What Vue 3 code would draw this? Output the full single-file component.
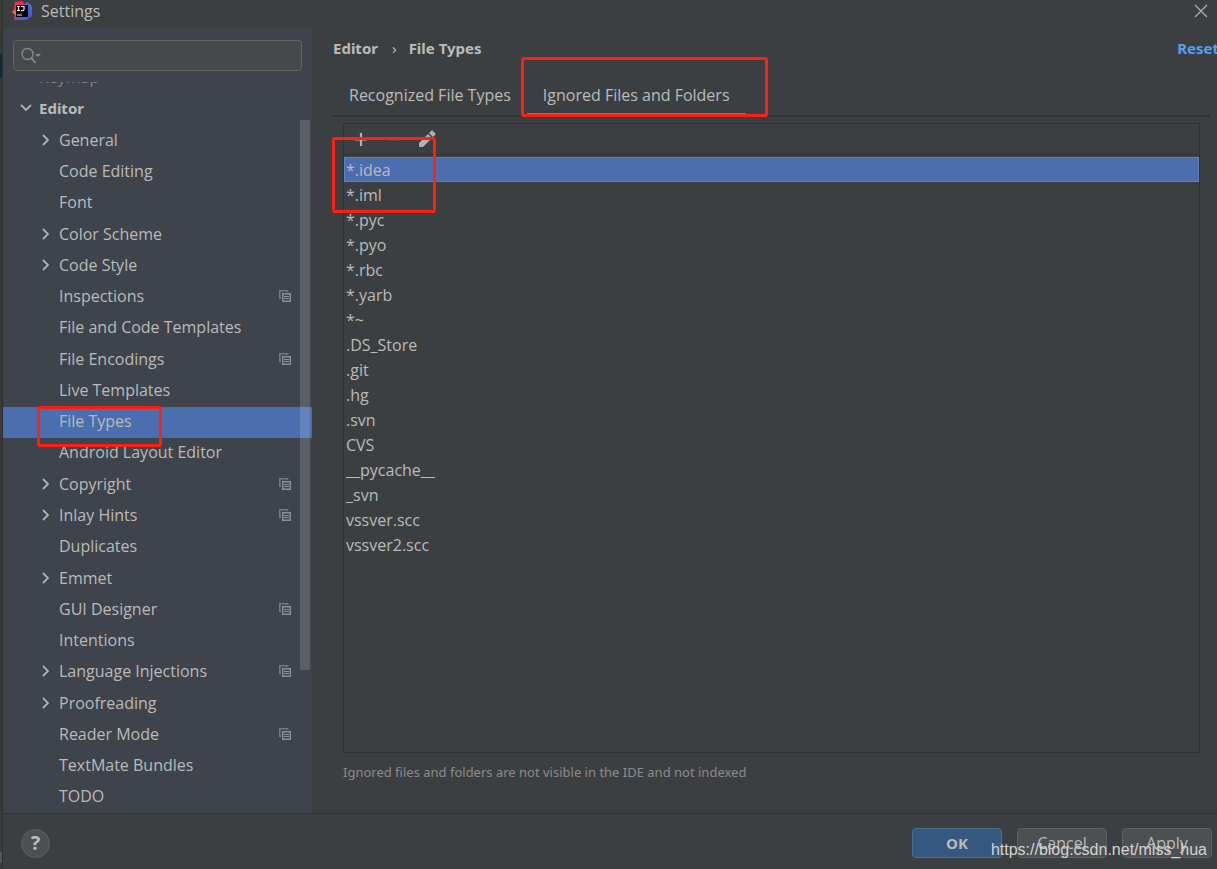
<script setup>
import { ref } from 'vue'

const tree = [
  { name: 'General', open: true },
  { name: 'Code Editing' },
  { name: 'Font' },
  { name: 'Color Scheme', open: true },
  { name: 'Code Style', open: true },
  { name: 'Inspections', project: true },
  { name: 'File and Code Templates' },
  { name: 'File Encodings', project: true },
  { name: 'Live Templates' },
  { name: 'File Types', marked: true },
  { name: 'Android Layout Editor' },
  { name: 'Copyright', open: true, project: true },
  { name: 'Inlay Hints', open: true, project: true },
  { name: 'Duplicates' },
  { name: 'Emmet', open: true },
  { name: 'GUI Designer', project: true },
  { name: 'Intentions' },
  { name: 'Language Injections', open: true, project: true },
  { name: 'Proofreading', open: true },
  { name: 'Reader Mode', project: true },
  { name: 'TextMate Bundles' },
  { name: 'TODO' },
]
const patterns = [
  '*.idea', '*.iml', '*.pyc', '*.pyo', '*.rbc', '*.yarb', '*~', '.DS_Store',
  '.git', '.hg', '.svn', 'CVS', '__pycache__', '_svn', 'vssver.scc', 'vssver2.scc',
]
const page = ref('File Types')
const pattern = ref('*.idea')
const query = ref('')
</script>

<template>
  <div class="screen">
    <div class="behind"><span class="behind-selection"></span><span class="behind-bar"></span></div>
    <div class="dialog">
      <header class="titlebar">
        <svg class="logo" width="20" height="20" viewBox="0 0 20 20">
          <defs>
            <linearGradient id="warm" x1="0" y1="0" x2="0" y2="1">
              <stop offset="0" stop-color="#fe2857" /><stop offset=".45" stop-color="#f4305f" />
              <stop offset=".65" stop-color="#fc801d" /><stop offset=".85" stop-color="#b13a9d" />
            </linearGradient>
            <linearGradient id="cool" x1="0" y1="0" x2="1" y2="1">
              <stop offset="0" stop-color="#7b4fd0" /><stop offset=".5" stop-color="#3a70ee" /><stop offset="1" stop-color="#5348d8" />
            </linearGradient>
          </defs>
          <path d="M3 1 10 0l3 4-2 15-9 0 1-5-3-3 2-3z" fill="url(#warm)" />
          <path d="m12 4 3-3 5 4v10l-6 4-9 0 7-4z" fill="url(#cool)" />
          <path d="M4 4h12v12H4z" fill="#050505" />
          <path d="M5 5.500h3M6.500 5.500v4M5 9.500h3M9 5.500h3v3q0 1.200-1.200 1.200H9M5 14h5" fill="none" stroke="#eee" stroke-width="1.200" />
        </svg>
        <span class="title">Settings</span>
        <button class="close" aria-label="Close">
          <svg width="14" height="14" viewBox="0 0 14 14"><path d="m1 1 12 12M13 1 1 13" fill="none" stroke="#afb1b3" stroke-width="1.200" /></svg>
        </button>
      </header>

      <div class="body">
        <aside class="sidebar">
          <label class="search">
            <svg width="22" height="18" viewBox="0 0 22 18">
              <circle cx="6.500" cy="7" r="5.500" fill="none" stroke="#7f8b91" stroke-width="1.400" />
              <path d="m10.500 11 4 5" stroke="#7f8b91" stroke-width="2" /><path d="M14 7h6L17 10z" fill="#7f8b91" />
            </svg>
            <input v-model="query" type="text" aria-label="Search settings" />
          </label>
          <nav class="tree" aria-label="Settings pages">
            <div class="scrolled"><span>Keymap</span></div>
            <div class="rows">
              <button class="row group">
                <svg class="arrow" width="12" height="12" viewBox="0 0 12 12"><path d="m1 3 5 5 5-5" /></svg>
                <span>Editor</span>
              </button>
              <button v-for="item in tree" :key="item.name" class="row" :class="{ selected: page === item.name }" @click="page = item.name">
                <svg v-if="item.open" class="arrow" width="12" height="12" viewBox="0 0 12 12"><path d="m3 1 5 5-5 5" /></svg>
                <span v-else class="arrow"></span>
                <span>{{ item.name }}</span>
                <svg v-if="item.project" class="project" width="12" height="12" viewBox="0 0 12 12">
                  <path class="back" d="M2 8.200H.8V.8h7.700V2" /><path d="M3.700 3.700h7.600v7.600H3.700z" /><path class="lines" d="M5 6.500h5M5 8.500h5" />
                </svg>
                <span v-if="item.marked" class="mark mark-page"></span>
              </button>
            </div>
            <span class="scrollbar"></span>
          </nav>
        </aside>

        <main class="content">
          <div class="crumbs">
            <span>Editor</span><span class="sep">›</span><span>File Types</span>
            <a class="reset" href="#reset">Reset</a>
          </div>
          <div class="tabs" role="tablist">
            <button role="tab" class="tab">Recognized File Types</button>
            <button role="tab" class="tab active" aria-selected="true">Ignored Files and Folders<span class="mark mark-tab"></span></button>
          </div>
          <section class="panel">
            <div class="tools">
              <button aria-label="Add"><svg width="20" height="20" viewBox="0 0 20 20"><path d="M10 4v13M4 10.500h12" stroke="#afb1b3" stroke-width="2.200" /></svg></button>
              <button aria-label="Remove" disabled><svg width="20" height="20" viewBox="0 0 20 20"><path d="M4 10.500h12" stroke="#5c5f61" stroke-width="2" /></svg></button>
              <button aria-label="Edit"><svg width="20" height="20" viewBox="0 0 20 20"><path d="m2 14 9-9 4 4-9 9H2zM12 4l2.300-2.300q.7-.7 1.400 0l2.600 2.600q.7.700 0 1.400L16 8z" fill="#afb1b3" /></svg></button>
            </div>
            <ul class="patterns" role="listbox" aria-label="Ignored files and folders">
              <li v-for="p in patterns" :key="p" role="option" :aria-selected="p === pattern" :class="{ selected: p === pattern }" @click="pattern = p">{{ p }}</li>
            </ul>
            <span class="mark mark-patterns"></span>
          </section>
          <p class="hint">Ignored files and folders are not visible in the IDE and not indexed</p>
        </main>
      </div>

      <footer class="footer">
        <button class="help" aria-label="Help">?</button>
        <button class="action primary">OK</button>
        <button class="action">Cancel</button>
        <button class="action">Apply</button>
        <span class="watermark">https://blog.csdn.net/miss_hua</span>
      </footer>
    </div>
  </div>
</template>

<style>
body { margin: 0; background: #3c3f41; }
</style>

<style scoped>
* { box-sizing: border-box; }
.screen { display: flex; min-height: 100vh; overflow: hidden; font: 16px/20px "Open Sans", "Noto Sans", sans-serif; color: #bbbbbb; background: #3c3f41; }
button { font: inherit; color: inherit; background: none; border: 0; padding: 0; text-align: left; }
.behind { display: flex; flex-direction: column; justify-content: space-between; flex: 0 0 3px; padding: 54px 0 6px; background: #3a3b39; border-right: 1px solid #2d2f30; }
.behind-selection { height: 24px; background: #0d293e; }
.behind-bar { height: 11px; background: #55585a; }
.dialog { flex: 1; min-width: 0; display: flex; flex-direction: column; }
.titlebar { display: flex; align-items: center; height: 28px; padding: 0 9px 6px; }
.title { margin-left: 9px; flex: 1; }
.close { display: flex; }
.body { flex: 1; display: flex; }
.sidebar { flex: 0 0 309px; display: flex; flex-direction: column; padding-top: 12px; background: #3e434c; }
.search { display: flex; align-items: center; height: 31px; margin: 0 10px 11px; padding-left: 7px; background: #45494a; border: 1px solid #646464; border-radius: 4px; }
.search input { flex: 1; min-width: 0; border: 0; outline: 0; background: transparent; color: inherit; font: inherit; }
.tree { position: relative; flex: 1; display: flex; flex-direction: column; }
.scrolled { display: flex; align-items: flex-end; height: 12px; overflow: hidden; padding: 0 36px 7px; color: #83878c; }
.rows { flex: 1; display: grid; grid-auto-rows: 1fr; }
.row { position: relative; display: flex; align-items: center; min-height: 31px; padding: 0 21px 2px 37px; }
.row.group { padding-left: 17px; font: 700 15px/20px "Noto Sans", sans-serif; padding-bottom: 4px; }
.row.selected { background: #4b6eaf; }
.arrow { width: 12px; margin-right: 7px; fill: none; stroke: #afb1b3; stroke-width: 1.800; }
.project { margin-left: auto; fill: none; stroke: #87939a; stroke-width: 1.400; }
.project .back { stroke: #6f7b83; stroke-width: 1.600; }
.project .lines { stroke-width: 1; }
.scrollbar { position: absolute; top: 38px; right: 2px; width: 10px; height: 550px; background: rgba(255, 255, 255, 0.15); }
.mark { position: absolute; border: 3px solid #ff2012; border-radius: 3px; pointer-events: none; }
.mark-page { left: 34px; top: -1px; width: 125px; height: 41px; z-index: 1; }
.content { flex: 1; min-width: 0; display: flex; flex-direction: column; padding: 10px 7px 0 21px; }
.crumbs { display: flex; font: 700 15px/20px "Noto Sans", sans-serif; margin-right: -9px; }
.sep { margin: 0 12px 0 14px; font-weight: 400; }
.reset { margin-left: auto; color: #589df6; text-decoration: none; }
.tabs { display: flex; height: 59px; border-bottom: 2px solid #323232; }
.tab { position: relative; padding: 18px 16px 0; margin-bottom: -1px; border-bottom: 3px solid transparent; white-space: nowrap; }
.tab.active { border-color: #5b83c4; }
.mark-tab { left: -6px; top: -1px; width: 247px; height: 60px; z-index: 1; }
.panel { position: relative; flex: 1; margin: 6px 10px 0; border: 1px solid #323232; }
.tools { display: flex; gap: 13px; height: 31px; padding: 5px 7px; border-bottom: 1px solid #323232; }
.tools button { display: flex; }
.patterns { list-style: none; margin: 2px 0 0; padding: 0; }
.patterns li { height: 25px; padding: 3px 2px 0; }
.patterns li.selected { background: #4b6eaf; box-shadow: inset 0 0 0 1px #5f82c4; }
.mark-patterns { left: -12px; top: 13px; width: 104px; height: 76px; }
.hint { margin: 9px 10px 31px; font: 13px/20px "Noto Sans", sans-serif; color: #8c8c8c; }
.footer { position: relative; display: flex; align-items: center; gap: 15px; height: 56px; padding: 3px 5px 0 18px; border-top: 1px solid #303233; }
.help { width: 29px; height: 29px; margin-right: auto; border: 1px solid #5e6060; border-radius: 50%; background: #4c5052; font-size: 20px; font-weight: 700; text-align: center; }
.action { width: 90px; height: 30px; border: 1px solid #5e6060; border-radius: 4px; background: #4c5052; text-align: center; }
.primary { background: #365880; border-color: #4c708c; font: 700 15px/20px "Noto Sans", sans-serif; }
.watermark { position: absolute; right: 10px; bottom: 9px; font: 16px/20px "Liberation Sans", Arial, sans-serif; color: #d4d4d4; }
</style>
